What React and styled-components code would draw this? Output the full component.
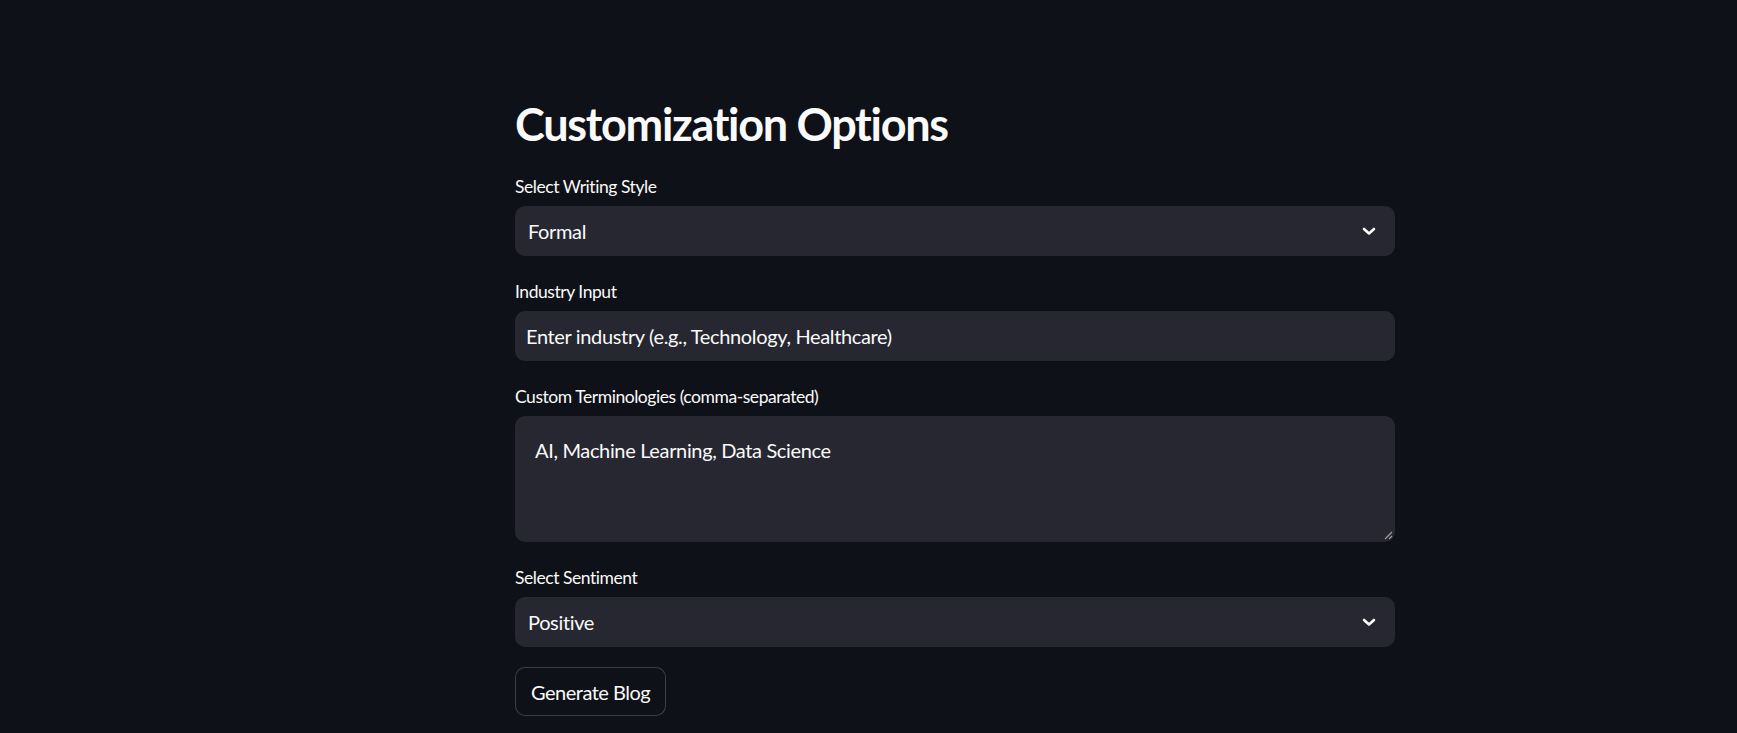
import React from "react";
import styled, { createGlobalStyle } from "styled-components";

const Global = createGlobalStyle`
  html, body { margin: 0; padding: 0; background: #0e1117; }
  body {
    font-family: "Lato", "Liberation Sans", sans-serif;
    color: #fafafa;
    font-variant-ligatures: none;
  }
  * { box-sizing: border-box; }
`;

const Page = styled.main`
  min-height: 733px;
  padding: 97px 0 0 515px;
`;

const Column = styled.div`
  width: 880px;
  display: flex;
  flex-direction: column;
`;

const Heading = styled.h2`
  margin: 0 0 22px;
  font-size: 45px;
  line-height: 54px;
  font-weight: 700;
  letter-spacing: -1.3px;
  color: #fafafa;
`;

const Field = styled.div`
  display: flex;
  flex-direction: column;
  margin-bottom: 22px;
`;

const Label = styled.label`
  font-size: 17.5px;
  line-height: 27px;
  letter-spacing: -0.45px;
  margin-bottom: 6px;
  color: #fafafa;
`;

const Box = styled.div`
  position: relative;
  display: flex;
  align-items: ${(p) => (p.$multi ? "flex-start" : "center")};
  height: ${(p) => p.$h || 50}px;
  padding: ${(p) => p.$pad};
  background: #262730;
  border-radius: 10px;
  font-size: 20px;
  letter-spacing: -0.35px;
  color: #fafafa;
`;

const Value = styled.span`
  flex: 1;
  line-height: 28px;
`;

const Chevron = styled.svg`
  width: 16px;
  height: 16px;
  margin-right: 18px;
`;

const Resize = styled.svg`
  position: absolute;
  right: 2px;
  bottom: 2px;
  width: 9px;
  height: 9px;
`;

const Button = styled.button`
  align-self: flex-start;
  margin-top: -2px;
  height: 49px;
  padding: 0 15px;
  background: #0e1117;
  border: 1px solid rgba(250, 250, 250, 0.2);
  border-radius: 10px;
  font-family: inherit;
  font-size: 20px;
  letter-spacing: -0.5px;
  color: #fafafa;
`;

function Select({ value }) {
  return (
    <Box $pad="0 0 0 13px">
      <Value>{value}</Value>
      <Chevron viewBox="0 0 16 16">
        <polyline points="3,6 8,10.5 13,6" fill="none" stroke="#fafafa" strokeWidth="2.6" strokeLinecap="round" strokeLinejoin="round" />
      </Chevron>
    </Box>
  );
}

export default function App() {
  return (
    <>
      <Global />
      <Page>
        <Column>
          <Heading>Customization Options</Heading>
          <Field>
            <Label>Select Writing Style</Label>
            <Select value="Formal" />
          </Field>
          <Field>
            <Label>Industry Input</Label>
            <Box $pad="0 11px">
              <Value>Enter industry (e.g., Technology, Healthcare)</Value>
            </Box>
          </Field>
          <Field>
            <Label>Custom Terminologies (comma-separated)</Label>
            <Box $multi $h={126} $pad="20px 20px">
              <Value>AI, Machine Learning, Data Science</Value>
              <Resize viewBox="0 0 9 9">
                <line x1="1" y1="8" x2="8" y2="1" stroke="#9a9aa0" strokeWidth="1.2" />
                <line x1="5" y1="8" x2="8" y2="5" stroke="#9a9aa0" strokeWidth="1.2" />
              </Resize>
            </Box>
          </Field>
          <Field>
            <Label>Select Sentiment</Label>
            <Select value="Positive" />
          </Field>
          <Button>Generate Blog</Button>
        </Column>
      </Page>
    </>
  );
}
